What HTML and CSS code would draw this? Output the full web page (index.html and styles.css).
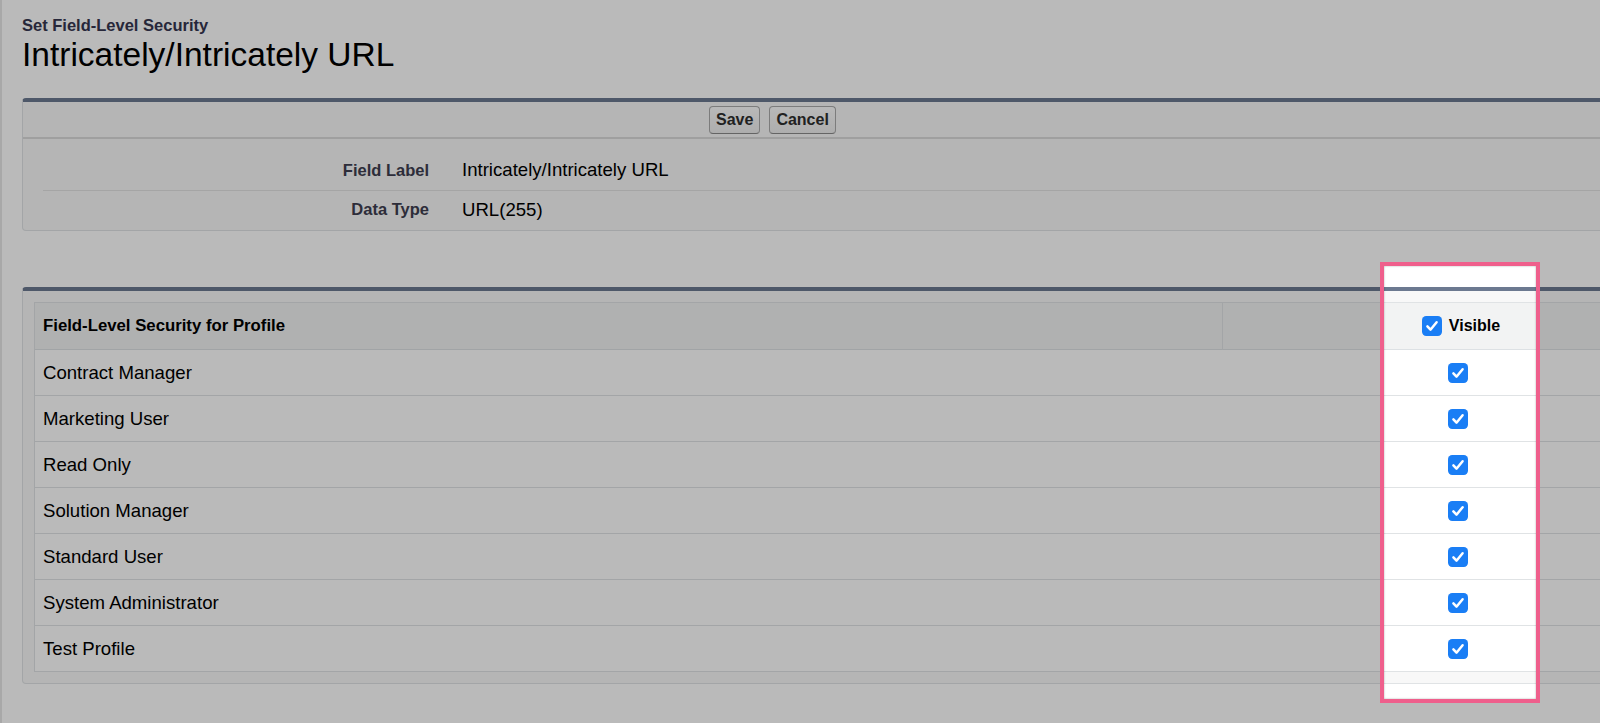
FILE: index.html
```html
<!DOCTYPE html>
<html lang="en">
<head>
<meta charset="utf-8">
<title>Set Field-Level Security</title>
<link rel="stylesheet" href="styles.css">
</head>
<body>
<div class="page">
  <div class="ptHeader">
    <div class="pageType">Set Field-Level Security</div>
    <h1 class="pageDescription">Intricately/Intricately URL</h1>
  </div>

  <div class="pblock">
    <div class="pbButtons">
      <button class="btn" type="button">Save</button>
      <button class="btn" type="button">Cancel</button>
    </div>
    <div class="pbDetail">
      <div class="detailRow">
        <div class="labelCol">Field Label</div>
        <div class="dataCol">Intricately/Intricately URL</div>
      </div>
      <div class="detailRow last">
        <div class="labelCol">Data Type</div>
        <div class="dataCol">URL(255)</div>
      </div>
    </div>
  </div>

  <div class="pblock pblock-list">
    <div class="list">
      <div class="hcell hname">Field-Level Security for Profile</div>
      <div class="hcell hvis"><span class="visHead"><span class="cb"><svg viewBox="0 0 20 20" width="20" height="20"><rect width="20" height="20" rx="4.2" fill="#1a7ef5"/><path d="M5.4 10.4 8.5 13.7 14.6 6.2" fill="none" stroke="#fff" stroke-width="2.5" stroke-linecap="round" stroke-linejoin="round"/></svg></span>Visible</span></div>

      <div class="cell">Contract Manager</div>
      <div class="cell cbcell"><span class="cb"><svg viewBox="0 0 20 20" width="20" height="20"><rect width="20" height="20" rx="4.2" fill="#1a7ef5"/><path d="M5.4 10.4 8.5 13.7 14.6 6.2" fill="none" stroke="#fff" stroke-width="2.5" stroke-linecap="round" stroke-linejoin="round"/></svg></span></div>

      <div class="cell">Marketing User</div>
      <div class="cell cbcell"><span class="cb"><svg viewBox="0 0 20 20" width="20" height="20"><rect width="20" height="20" rx="4.2" fill="#1a7ef5"/><path d="M5.4 10.4 8.5 13.7 14.6 6.2" fill="none" stroke="#fff" stroke-width="2.5" stroke-linecap="round" stroke-linejoin="round"/></svg></span></div>

      <div class="cell">Read Only</div>
      <div class="cell cbcell"><span class="cb"><svg viewBox="0 0 20 20" width="20" height="20"><rect width="20" height="20" rx="4.2" fill="#1a7ef5"/><path d="M5.4 10.4 8.5 13.7 14.6 6.2" fill="none" stroke="#fff" stroke-width="2.5" stroke-linecap="round" stroke-linejoin="round"/></svg></span></div>

      <div class="cell">Solution Manager</div>
      <div class="cell cbcell"><span class="cb"><svg viewBox="0 0 20 20" width="20" height="20"><rect width="20" height="20" rx="4.2" fill="#1a7ef5"/><path d="M5.4 10.4 8.5 13.7 14.6 6.2" fill="none" stroke="#fff" stroke-width="2.5" stroke-linecap="round" stroke-linejoin="round"/></svg></span></div>

      <div class="cell">Standard User</div>
      <div class="cell cbcell"><span class="cb"><svg viewBox="0 0 20 20" width="20" height="20"><rect width="20" height="20" rx="4.2" fill="#1a7ef5"/><path d="M5.4 10.4 8.5 13.7 14.6 6.2" fill="none" stroke="#fff" stroke-width="2.5" stroke-linecap="round" stroke-linejoin="round"/></svg></span></div>

      <div class="cell">System Administrator</div>
      <div class="cell cbcell"><span class="cb"><svg viewBox="0 0 20 20" width="20" height="20"><rect width="20" height="20" rx="4.2" fill="#1a7ef5"/><path d="M5.4 10.4 8.5 13.7 14.6 6.2" fill="none" stroke="#fff" stroke-width="2.5" stroke-linecap="round" stroke-linejoin="round"/></svg></span></div>

      <div class="cell">Test Profile</div>
      <div class="cell cbcell"><span class="cb"><svg viewBox="0 0 20 20" width="20" height="20"><rect width="20" height="20" rx="4.2" fill="#1a7ef5"/><path d="M5.4 10.4 8.5 13.7 14.6 6.2" fill="none" stroke="#fff" stroke-width="2.5" stroke-linecap="round" stroke-linejoin="round"/></svg></span></div>
    </div>
  </div>

  <div class="spotlight"></div>
</div>
</body>
</html>
```

FILE: styles.css
```css
html, body {
  margin: 0;
  padding: 0;
}

body {
  background: #ffffff;
  font-family: "Liberation Sans", Arial, Helvetica, sans-serif;
  color: #000;
  width: 1600px;
  height: 723px;
  overflow: hidden;
  position: relative;
}

.page {
  border-left: 2px solid #e6e6e6;
  padding-left: 20px;
  height: 723px;
  box-sizing: border-box;
}

.ptHeader {
  padding-top: 15px;
}

.pageType {
  font-size: 16.5px;
  font-weight: bold;
  line-height: 20px;
  color: #363650;
}

.pageDescription {
  margin: 0;
  font-size: 33.5px;
  font-weight: normal;
  line-height: 39px;
  color: #000;
}

.pblock {
  width: 1688px;
  margin-top: 24px;
  background: #f8f8f8;
  border: 1px solid #e0e3e5;
  border-top: 4px solid #6c7990;
  border-radius: 4px;
  box-sizing: border-box;
}

.pbButtons {
  height: 35px;
  display: flex;
  align-items: center;
  gap: 9px;
  padding-left: 686px;
  border-bottom: 2px solid #dbdbdb;
}

.btn {
  margin: 0;
  height: 28px;
  padding: 0 6px;
  font-family: "Liberation Sans", Arial, sans-serif;
  font-size: 16px;
  font-weight: bold;
  color: #2e2e2e;
  background: linear-gradient(#fdfdfd, #eeeeee);
  border: 1px solid #aaaaaa;
  border-bottom-color: #8a8a8a;
  border-radius: 4px;
}

.pbDetail {
  padding: 11px 0 2px 20px;
}

.detailRow {
  display: grid;
  grid-template-columns: 386px 1fr;
  column-gap: 33px;
  height: 41px;
  line-height: 40px;
  border-bottom: 1px solid #e3e3e3;
  box-sizing: border-box;
}

.detailRow.last {
  height: 37px;
  line-height: 37px;
  border-bottom: none;
}

.labelCol {
  text-align: right;
  font-size: 16.5px;
  font-weight: bold;
  color: #3e3e50;
}

.dataCol {
  font-size: 18.6px;
  color: #000;
}

.pblock-list {
  margin-top: 56px;
  padding: 11px;
}

.list {
  display: grid;
  grid-template-columns: 1187px 1fr;
  border: 1px solid #e0e3e5;
  border-bottom: none;
  background: #fff;
}

.hcell {
  height: 47px;
  box-sizing: border-box;
  background: #f2f3f3;
  border-bottom: 1px solid #dde1e4;
  display: flex;
  align-items: center;
}

.hname {
  padding-left: 8px;
  font-size: 16.75px;
  font-weight: bold;
  color: #000;
}

.hvis {
  border-left: 1px solid #e0e3e5;
  justify-content: center;
}

.visHead {
  display: flex;
  align-items: center;
  gap: 7px;
  font-size: 16px;
  font-weight: bold;
  color: #000;
  padding-left: 2px;
}

.cell {
  height: 46px;
  box-sizing: border-box;
  border-bottom: 1px solid #e0e3e5;
  display: flex;
  align-items: center;
  padding-left: 8px;
  font-size: 18.6px;
  color: #000;
  background: #fff;
}

.cbcell {
  justify-content: center;
  padding-left: 0;
  padding-right: 3px;
}

.cb {
  display: block;
  width: 20px;
  height: 20px;
}

.cb svg {
  display: block;
}

.spotlight {
  position: absolute;
  left: 1380px;
  top: 262px;
  width: 160px;
  height: 441px;
  box-sizing: border-box;
  border: 4px solid #ef5f8c;
  box-shadow: 0 0 0 4000px rgba(0, 0, 0, 0.27), inset 0 0 2px rgba(0, 0, 0, 0.35);
  pointer-events: none;
  z-index: 10;
}
```
